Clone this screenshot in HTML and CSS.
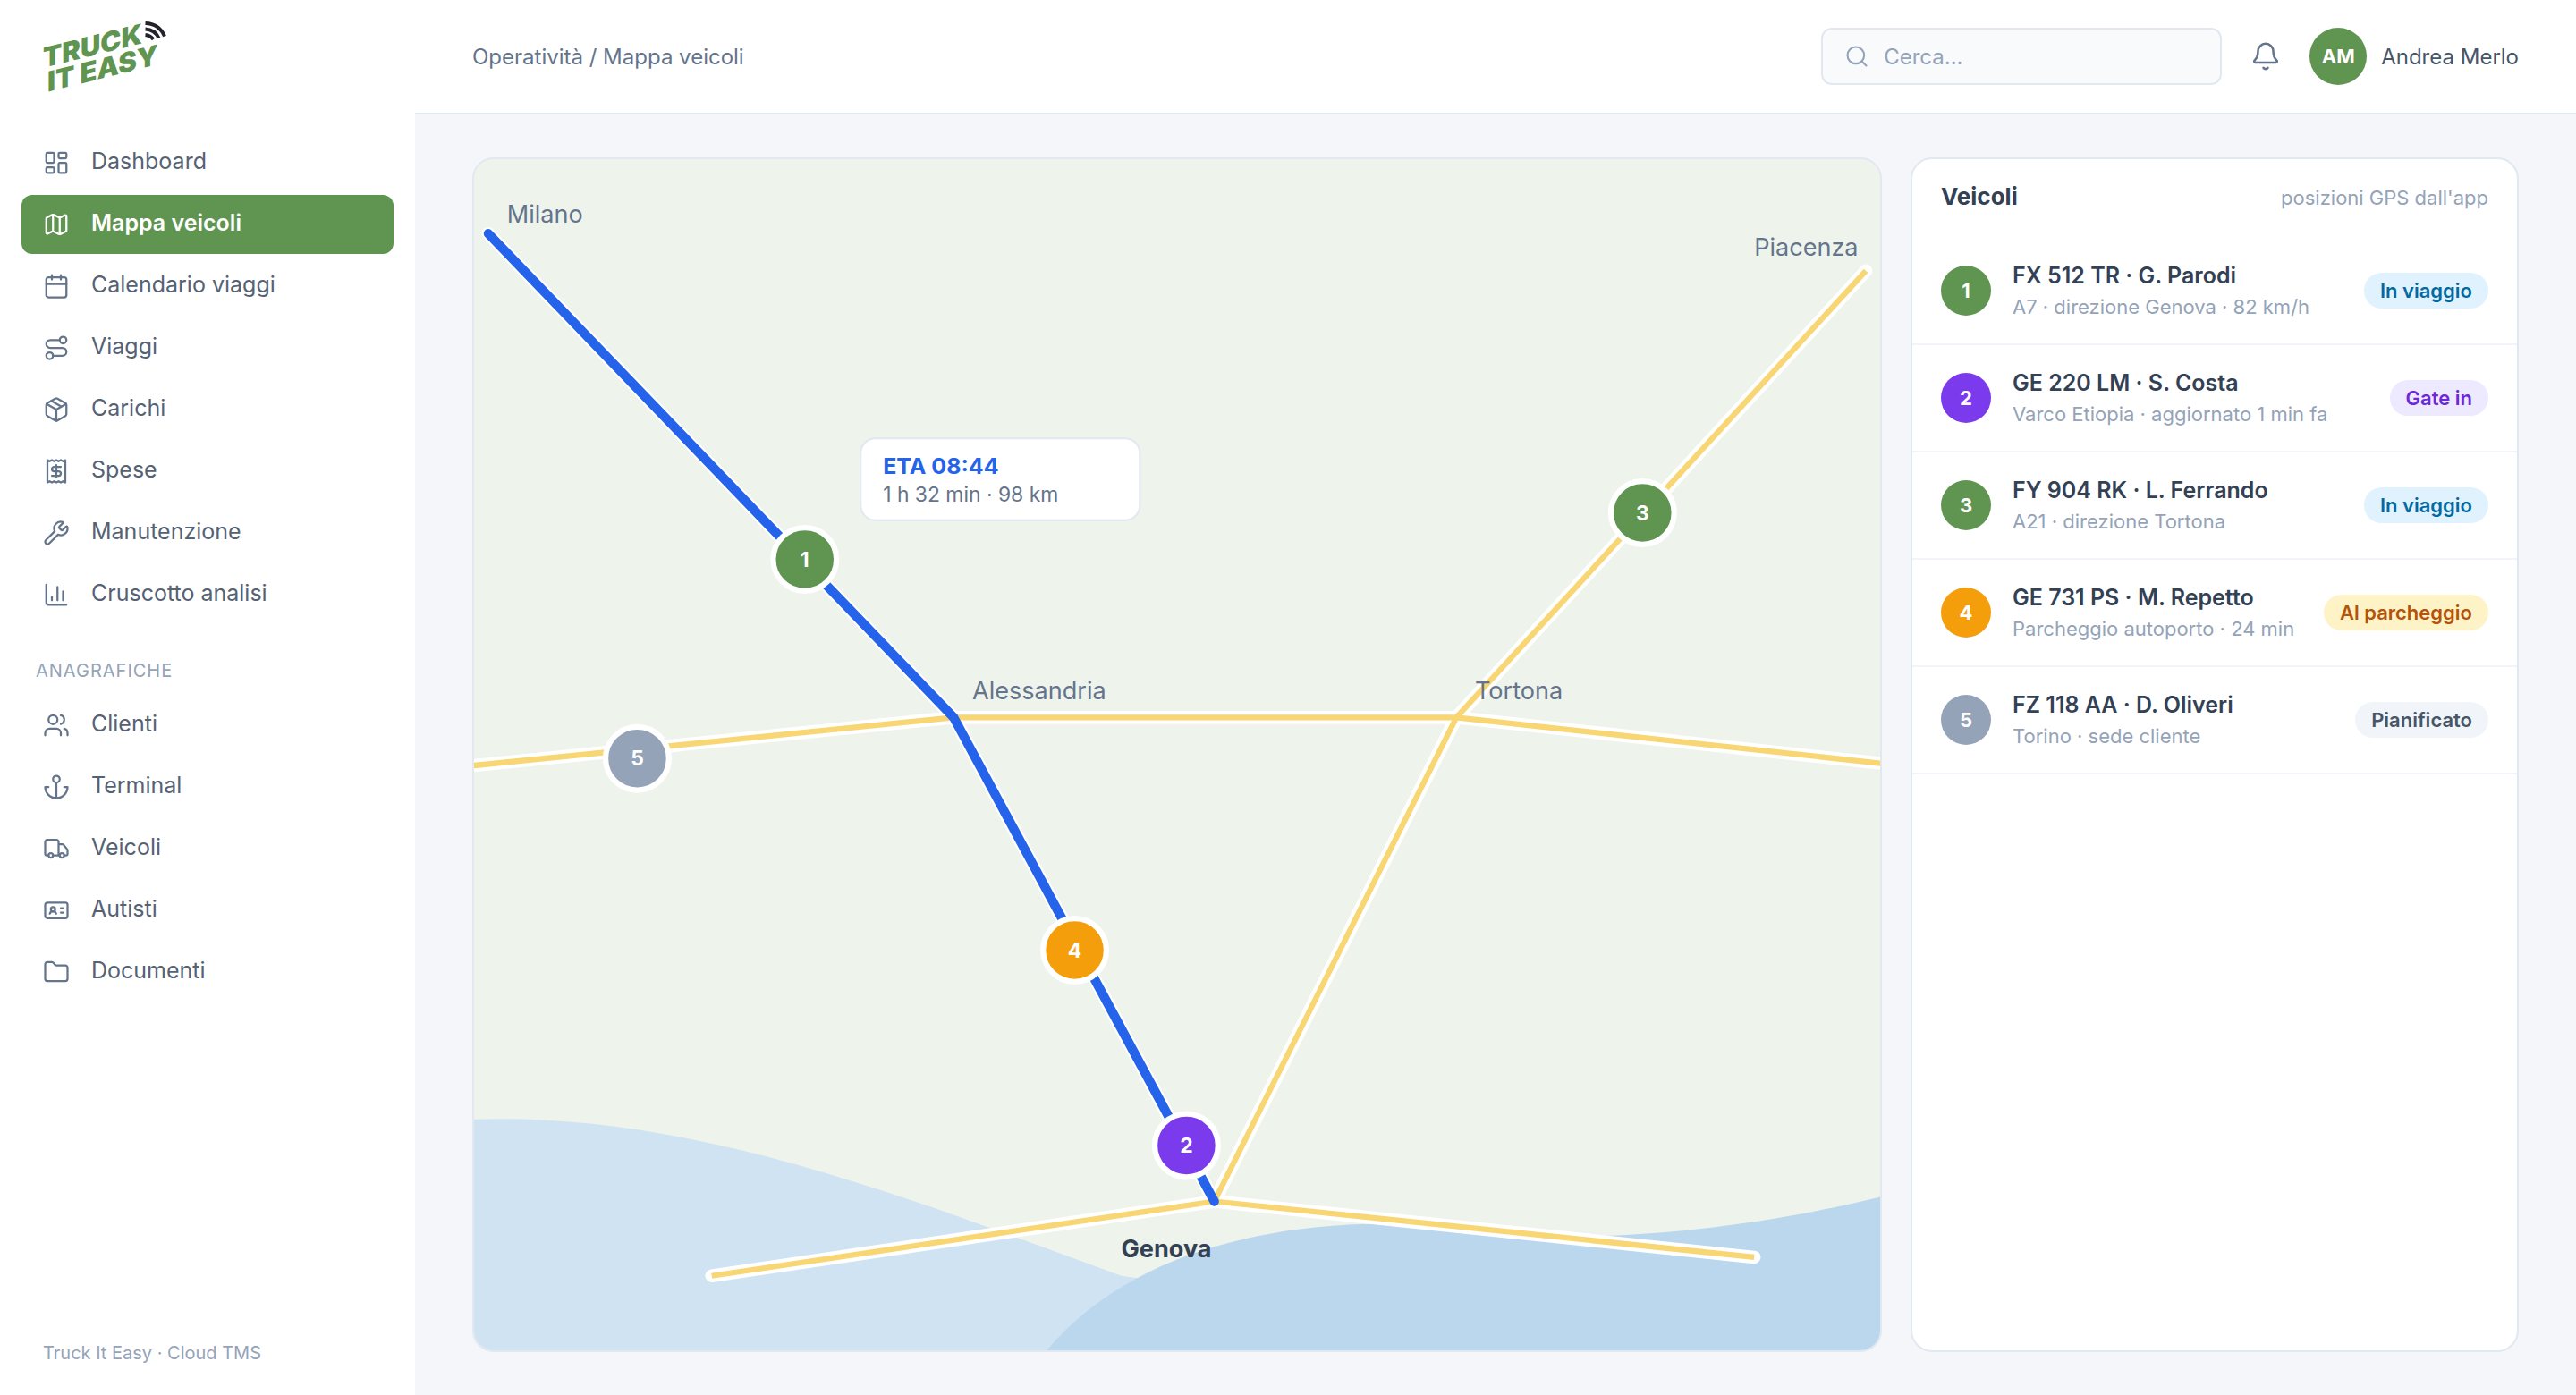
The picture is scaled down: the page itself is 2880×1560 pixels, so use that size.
FILE: index.html
```html
<!DOCTYPE html>
<html lang="it">
<head>
<meta charset="utf-8">
<meta name="viewport" content="width=device-width, initial-scale=1">
<title>Mappa veicoli · Truck It Easy</title>
<link rel="stylesheet" href="styles.css">
</head>
<body>
<div class="app">
  <aside class="sidebar">
    <a class="logo" href="#" aria-label="Truck It Easy">
      <svg class="logo-art" viewBox="0 0 140 82" role="img" aria-hidden="true">
        <g class="logo-text" transform="skewY(-14)">
          <text x="0" y="54">TRUCK</text>
          <text x="5" y="82">IT EASY</text>
        </g>
        <g class="logo-waves">
          <path d="M114.500 4Q130 4.500 136 18.500"/>
          <path d="M114.500 10.500Q125 11 129.500 20.500"/>
          <path d="M114.500 17Q120 17.500 123.500 22"/>
        </g>
      </svg>
    </a>
    <nav class="nav" aria-label="Principale">
      <ul class="nav-list">
        <li><a class="nav-item" href="#"><svg class="icon" viewBox="0 0 24 24"><rect x="3" y="3" width="7" height="9" rx="1"/><rect x="14" y="3" width="7" height="5" rx="1"/><rect x="14" y="12" width="7" height="9" rx="1"/><rect x="3" y="16" width="7" height="5" rx="1"/></svg><span class="nav-label">Dashboard</span></a></li>
        <li><a class="nav-item active" href="#" aria-current="page"><svg class="icon" viewBox="0 0 24 24"><path d="M14.106 5.553a2 2 0 0 0 1.788 0l3.659-1.83A1 1 0 0 1 21 4.619v12.764a1 1 0 0 1-.553.894l-4.553 2.277a2 2 0 0 1-1.788 0l-4.212-2.106a2 2 0 0 0-1.788 0l-3.659 1.83A1 1 0 0 1 3 19.381V6.618a1 1 0 0 1 .553-.894l4.553-2.277a2 2 0 0 1 1.788 0z"/><path d="M15 5.764v15M9 3.236v15"/></svg><span class="nav-label">Mappa veicoli</span></a></li>
        <li><a class="nav-item" href="#"><svg class="icon" viewBox="0 0 24 24"><path d="M8 2v4M16 2v4M3 10h18"/><rect x="3" y="4" width="18" height="18" rx="2"/></svg><span class="nav-label">Calendario viaggi</span></a></li>
        <li><a class="nav-item" href="#"><svg class="icon" viewBox="0 0 24 24"><circle cx="6" cy="19" r="3"/><path d="M9 19h8.500a3.500 3.500 0 0 0 0-7h-11a3.500 3.500 0 0 1 0-7H15"/><circle cx="18" cy="5" r="3"/></svg><span class="nav-label">Viaggi</span></a></li>
        <li><a class="nav-item" href="#"><svg class="icon" viewBox="0 0 24 24"><path d="M11 21.730a2 2 0 0 0 2 0l7-4A2 2 0 0 0 21 16V8a2 2 0 0 0-1-1.730l-7-4a2 2 0 0 0-2 0l-7 4A2 2 0 0 0 3 8v8a2 2 0 0 0 1 1.730z"/><path d="M12 22V12M3.290 7 12 12l8.710-5M7.500 4.270l9 5.150"/></svg><span class="nav-label">Carichi</span></a></li>
        <li><a class="nav-item" href="#"><svg class="icon" viewBox="0 0 24 24"><path d="M4 2v20l2-1 2 1 2-1 2 1 2-1 2 1 2-1 2 1V2l-2 1-2-1-2 1-2-1-2 1-2-1-2 1Z"/><path d="M16 8h-6a2 2 0 1 0 0 4h4a2 2 0 1 1 0 4H8M12 17.500v-11"/></svg><span class="nav-label">Spese</span></a></li>
        <li><a class="nav-item" href="#"><svg class="icon" viewBox="0 0 24 24"><path d="M14.700 6.300a1 1 0 0 0 0 1.400l1.600 1.600a1 1 0 0 0 1.400 0l3.106-3.105c.32-.322.863-.22.983.218a6 6 0 0 1-8.259 7.057l-7.910 7.910a1 1 0 0 1-2.999-3l7.910-7.910a6 6 0 0 1 7.057-8.259c.438.12.54.662.219.984z"/></svg><span class="nav-label">Manutenzione</span></a></li>
        <li><a class="nav-item" href="#"><svg class="icon" viewBox="0 0 24 24"><path d="M3 3v16a2 2 0 0 0 2 2h16M18 17V9M13 17V5M8 17v-3"/></svg><span class="nav-label">Cruscotto analisi</span></a></li>
      </ul>
      <h2 class="nav-heading">Anagrafiche</h2>
      <ul class="nav-list">
        <li><a class="nav-item" href="#"><svg class="icon" viewBox="0 0 24 24"><path d="M16 21v-2a4 4 0 0 0-4-4H6a4 4 0 0 0-4 4v2"/><circle cx="9" cy="7" r="4"/><path d="M22 21v-2a4 4 0 0 0-3-3.870M16 3.130a4 4 0 0 1 0 7.750"/></svg><span class="nav-label">Clienti</span></a></li>
        <li><a class="nav-item" href="#"><svg class="icon" viewBox="0 0 24 24"><path d="M12 22V8M5 12H2a10 10 0 0 0 20 0h-3"/><circle cx="12" cy="5" r="3"/></svg><span class="nav-label">Terminal</span></a></li>
        <li><a class="nav-item" href="#"><svg class="icon" viewBox="0 0 24 24"><path d="M14 18V6a2 2 0 0 0-2-2H4a2 2 0 0 0-2 2v11a1 1 0 0 0 1 1h2M15 18H9M19 18h2a1 1 0 0 0 1-1v-3.650a1 1 0 0 0-.22-.624l-3.480-4.350A1 1 0 0 0 17.520 8H14"/><circle cx="17" cy="18" r="2"/><circle cx="7" cy="18" r="2"/></svg><span class="nav-label">Veicoli</span></a></li>
        <li><a class="nav-item" href="#"><svg class="icon" viewBox="0 0 24 24"><path d="M16 10h2M16 14h2M6.170 15a3 3 0 0 1 5.660 0"/><circle cx="9" cy="11" r="2"/><rect x="2" y="5" width="20" height="14" rx="2"/></svg><span class="nav-label">Autisti</span></a></li>
        <li><a class="nav-item" href="#"><svg class="icon" viewBox="0 0 24 24"><path d="M20 20a2 2 0 0 0 2-2V8a2 2 0 0 0-2-2h-7.900a2 2 0 0 1-1.690-.9L9.600 3.900A2 2 0 0 0 7.930 3H4a2 2 0 0 0-2 2v13a2 2 0 0 0 2 2Z"/></svg><span class="nav-label">Documenti</span></a></li>
      </ul>
    </nav>
    <p class="sidebar-foot">Truck It Easy · Cloud TMS</p>
  </aside>

  <div class="content">
    <header class="topbar">
      <p class="breadcrumb">Operatività / Mappa veicoli</p>
      <label class="search">
        <svg class="icon search-icon" viewBox="0 0 24 24"><circle cx="11" cy="11" r="8"/><path d="m21 21-4.300-4.300"/></svg>
        <input class="search-input" type="text" placeholder="Cerca..." aria-label="Cerca">
      </label>
      <button class="bell" type="button" aria-label="Notifiche">
        <svg class="icon bell-icon" viewBox="0 0 24 24"><path d="M10.268 21a2 2 0 0 0 3.464 0M3.262 15.326A1 1 0 0 0 4 17h16a1 1 0 0 0 .74-1.673C19.410 13.956 18 12.499 18 8A6 6 0 0 0 6 8c0 4.499-1.411 5.956-2.738 7.326"/></svg>
      </button>
      <div class="user">
        <span class="avatar">AM</span>
        <span class="user-name">Andrea Merlo</span>
      </div>
    </header>

    <main class="main">
      <section class="card map-card" aria-label="Mappa veicoli">
        <svg class="map" viewBox="0 0 760 640" preserveAspectRatio="xMidYMid slice">
          <rect class="land" x="-40" y="-40" width="840" height="720"/>
          <path class="sea-light" d="M-20 516H0C120 511 240 560 350 600L440 612V680H-20Z"/>
          <path class="sea" d="M280 680L310 640C350 592 420 571 500 572C560 582 650 584 760 557L800 546V680Z"/>
          <g class="road-edge">
            <path d="M10 40L260 300L400 560"/>
            <path d="M-20 328L260 300H530L780 327"/>
            <path d="M750 60L530 300L400 560"/>
            <path d="M130 600L400 560L690 590"/>
          </g>
          <g class="road">
            <path d="M-20 328L260 300H530L780 327"/>
            <path d="M750 60L530 300L400 560"/>
            <path d="M130 600L400 560L690 590"/>
          </g>
          <path class="route" d="M10 40L260 300L400 560"/>
          <g class="city">
            <text x="20" y="34">Milano</text>
            <text x="690" y="52">Piacenza</text>
            <text x="270" y="290">Alessandria</text>
            <text x="540" y="290">Tortona</text>
            <text class="city-main" x="350" y="590">Genova</text>
          </g>
          <g class="marker">
            <circle class="green" cx="180" cy="215" r="17"/><text x="180" y="219">1</text>
            <circle class="violet" cx="385" cy="530" r="17"/><text x="385" y="534">2</text>
            <circle class="green" cx="630" cy="190" r="17"/><text x="630" y="194">3</text>
            <circle class="amber" cx="325" cy="425" r="17"/><text x="325" y="429">4</text>
            <circle class="slate" cx="90" cy="322" r="17"/><text x="90" y="326">5</text>
          </g>
          <g class="eta">
            <rect x="210" y="150" width="150" height="44" rx="8"/>
            <text class="eta-time" x="222" y="169">ETA 08:44</text>
            <text class="eta-info" x="222" y="184">1 h 32 min · 98 km</text>
          </g>
        </svg>
      </section>

      <section class="card vehicles">
        <header class="vehicles-head">
          <h1 class="vehicles-title">Veicoli</h1>
          <span class="vehicles-note">posizioni GPS dall'app</span>
        </header>
        <ul class="vehicle-list">
          <li class="vehicle">
            <span class="dot dot-green">1</span>
            <div class="vehicle-text"><strong class="vehicle-name">FX 512 TR · G. Parodi</strong><span class="vehicle-sub">A7 · direzione Genova · 82 km/h</span></div>
            <span class="badge badge-blue">In viaggio</span>
          </li>
          <li class="vehicle">
            <span class="dot dot-violet">2</span>
            <div class="vehicle-text"><strong class="vehicle-name">GE 220 LM · S. Costa</strong><span class="vehicle-sub">Varco Etiopia · aggiornato 1 min fa</span></div>
            <span class="badge badge-violet">Gate in</span>
          </li>
          <li class="vehicle">
            <span class="dot dot-green">3</span>
            <div class="vehicle-text"><strong class="vehicle-name">FY 904 RK · L. Ferrando</strong><span class="vehicle-sub">A21 · direzione Tortona</span></div>
            <span class="badge badge-blue">In viaggio</span>
          </li>
          <li class="vehicle">
            <span class="dot dot-amber">4</span>
            <div class="vehicle-text"><strong class="vehicle-name">GE 731 PS · M. Repetto</strong><span class="vehicle-sub">Parcheggio autoporto · 24 min</span></div>
            <span class="badge badge-amber">Al parcheggio</span>
          </li>
          <li class="vehicle">
            <span class="dot dot-slate">5</span>
            <div class="vehicle-text"><strong class="vehicle-name">FZ 118 AA · D. Oliveri</strong><span class="vehicle-sub">Torino · sede cliente</span></div>
            <span class="badge badge-slate">Pianificato</span>
          </li>
        </ul>
      </section>
    </main>
  </div>
</div>
</body>
</html>
```
FILE: styles.css
```css
* { box-sizing: border-box; }

body {
  margin: 0;
  background: #f4f6fa;
  color: #334155;
  font-family: Inter, "Liberation Sans", sans-serif;
  font-size: 25px;
}

ul, h1, h2, p { margin: 0; padding: 0; }
ul { list-style: none; }
a { color: inherit; text-decoration: none; }

.app {
  display: grid;
  grid-template-columns: 464px minmax(0, 1fr);
  min-height: 100vh;
}

.icon {
  flex: none;
  width: 30px;
  height: 30px;
  fill: none;
  stroke: currentColor;
  stroke-width: 1.8;
  stroke-linecap: round;
  stroke-linejoin: round;
}

/* Sidebar */
.sidebar {
  display: flex;
  flex-direction: column;
  background: #fff;
  padding: 22px 24px 32px;
}
.logo {
  display: block;
  padding-left: 24px;
  height: 127px;
}
.logo-art { display: block; width: 140px; height: 82px; overflow: visible; }
.logo-text { fill: #5f9550; font-size: 31px; font-weight: 900; }
.logo-waves { fill: none; stroke: #23222d; stroke-width: 4; }

.nav-list { display: flex; flex-direction: column; gap: 3px; }
.nav-item {
  display: flex;
  align-items: center;
  gap: 24px;
  height: 66px;
  padding: 0 24px;
  border-radius: 12px;
  color: #64748b;
}
.nav-label { padding-bottom: 4px; color: #556274; }
.nav-item.active { background: #5f9550; color: #fff; font-weight: 600; }
.nav-item.active .nav-label { color: #fff; }
.nav-heading {
  padding: 38px 16px 14px;
  color: #94a3b8;
  font-size: 20px;
  font-weight: 400;
  line-height: 28px;
  letter-spacing: 1px;
  text-transform: uppercase;
}
.sidebar-foot {
  margin-top: auto;
  padding-left: 24px;
  color: #94a3b8;
  font-size: 20px;
  line-height: 30px;
}

/* Top bar */
.content { display: flex; flex-direction: column; min-width: 0; }
.topbar {
  display: flex;
  align-items: center;
  gap: 32px;
  height: 128px;
  padding: 0 64px;
  background: #fff;
  border-bottom: 2px solid #e2e8f0;
  font-size: 24px;
}
.breadcrumb { margin-right: auto; color: #64748b; }
.search {
  display: flex;
  align-items: center;
  gap: 16px;
  width: 448px;
  height: 64px;
  padding: 0 24px;
  background: #f8fafc;
  border: 2px solid #e2e8f0;
  border-radius: 12px;
  color: #94a3b8;
}
.search-icon { width: 28px; height: 28px; }
.search-input {
  flex: 1;
  min-width: 0;
  padding: 0;
  border: 0;
  outline: 0;
  background: none;
  color: #334155;
  font: inherit;
}
.search-input::placeholder { color: #94a3b8; opacity: 1; }
.bell { display: flex; padding: 0; border: 0; background: none; color: #64748b; }
.bell-icon { width: 34px; height: 34px; }
.user { display: flex; align-items: center; gap: 16px; color: #475569; }
.avatar {
  display: grid;
  place-items: center;
  width: 64px;
  height: 64px;
  border-radius: 50%;
  background: #5f9550;
  color: #fff;
  font-size: 22px;
  font-weight: 700;
}

/* Page */
.main {
  flex: 1;
  display: grid;
  grid-template-columns: minmax(0, 1fr) 680px;
  gap: 32px;
  padding: 48px 64px;
}
.card {
  overflow: hidden;
  background: #fff;
  border: 2px solid #e2e8f0;
  border-radius: 24px;
}

/* Map */
.map-card { display: grid; background: #eef3eb; }
.map { display: block; width: 100%; height: 100%; min-height: 0; }
.land { fill: #eef3eb; }
.sea-light { fill: #d0e3f2; }
.sea { fill: #bbd7ee; }
.road-edge, .road, .route { fill: none; stroke-linejoin: round; }
.road-edge { stroke: #fff; stroke-width: 7; stroke-linecap: round; }
.road { stroke: #f8d674; stroke-width: 3; }
.route { stroke: #2563eb; stroke-width: 5; stroke-linecap: round; }
.city { fill: #64748b; font-size: 13px; }
.city-main { fill: #334155; font-weight: 700; }
.marker { fill: #fff; font-size: 11px; font-weight: 700; text-anchor: middle; }
.marker circle { stroke: #fff; stroke-width: 3; }
.green { fill: #5f9550; }
.violet { fill: #7c3aed; }
.amber { fill: #f59e0b; }
.slate { fill: #94a3b8; }
.eta rect { fill: #fff; stroke: #e2e8f0; stroke-width: 1; }
.eta-time { fill: #2563eb; font-size: 12px; font-weight: 700; }
.eta-info { fill: #64748b; font-size: 11px; }

/* Vehicle list */
.vehicles-head {
  display: flex;
  align-items: baseline;
  justify-content: space-between;
  height: 88px;
  padding: 24px 32px 0;
}
.vehicles-title { font-size: 26px; font-weight: 700; line-height: 36px; }
.vehicles-note { color: #94a3b8; font-size: 22px; }
.vehicle {
  display: flex;
  align-items: center;
  gap: 24px;
  height: 120px;
  padding: 0 32px;
  border-bottom: 2px solid #f1f5f9;
}
.dot {
  flex: none;
  display: grid;
  place-items: center;
  width: 56px;
  height: 56px;
  border-radius: 50%;
  color: #fff;
  font-size: 22px;
  font-weight: 700;
}
.dot-green { background: #5f9550; }
.dot-violet { background: #7c3aed; }
.dot-amber { background: #f59e0b; }
.dot-slate { background: #94a3b8; }
.vehicle-text { flex: 1; min-width: 0; display: flex; flex-direction: column; white-space: nowrap; }
.vehicle-name { font-size: 25px; font-weight: 600; line-height: 36px; }
.vehicle-sub { color: #94a3b8; font-size: 22px; line-height: 34px; }
.badge {
  flex: none;
  padding: 0 18px;
  border-radius: 20px;
  font-size: 22px;
  font-weight: 600;
  line-height: 40px;
}
.badge-blue { background: #e0f2fe; color: #0369a1; }
.badge-violet { background: #ede9fe; color: #6d28d9; }
.badge-amber { background: #fef3c7; color: #b45309; }
.badge-slate { background: #f1f5f9; color: #475569; }
```
